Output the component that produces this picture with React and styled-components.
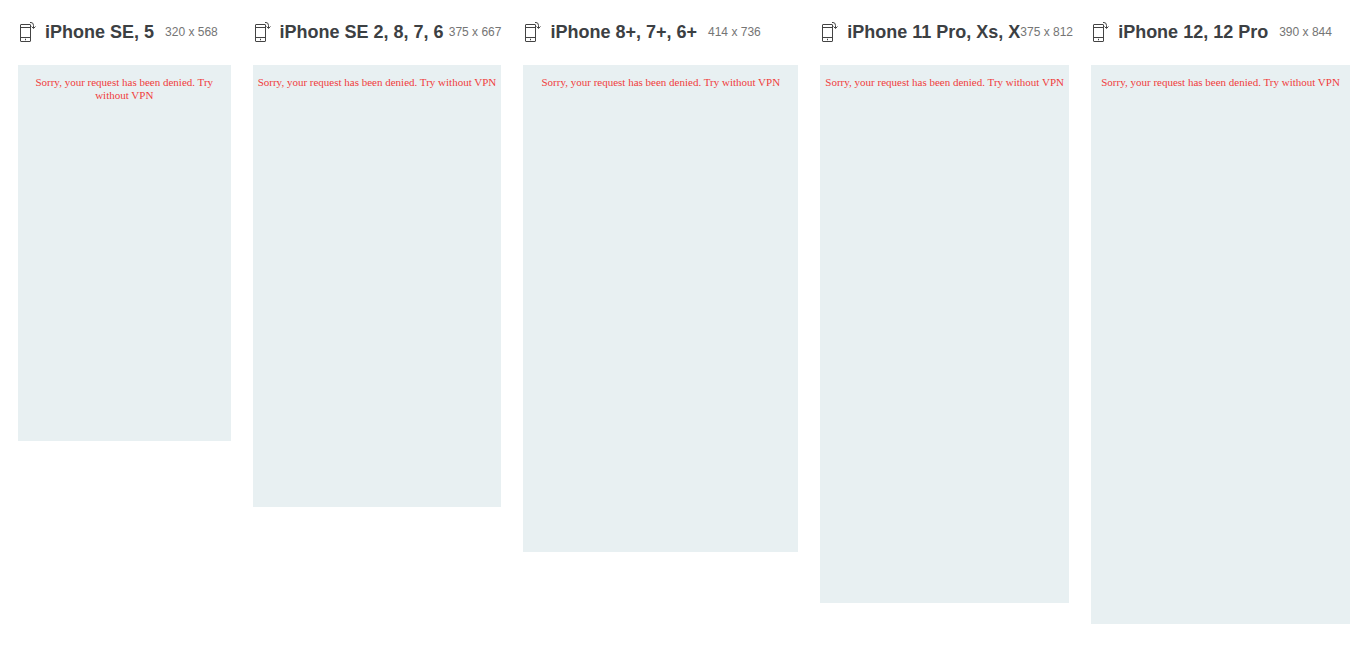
import { useState } from 'react';
import styled, { createGlobalStyle } from 'styled-components';

const devices = [
  { name: 'iPhone SE, 5', width: 320, height: 568 },
  { name: 'iPhone SE 2, 8, 7, 6', width: 375, height: 667 },
  { name: 'iPhone 8+, 7+, 6+', width: 414, height: 736 },
  { name: 'iPhone 11 Pro, Xs, X', width: 375, height: 812 },
  { name: 'iPhone 12, 12 Pro', width: 390, height: 844 },
];

const GlobalStyle = createGlobalStyle`
  body {
    margin: 0;
    background-color: #ffffff;
    font-family: 'Liberation Sans', Arial, sans-serif;
  }
`;

const DeviceGrid = styled.main`
  display: grid;
  grid-template-columns: ${(props) => props.$columns};
  align-items: start;
  gap: 22px;
  padding: 16px 22px 24px 18px;
`;

const DeviceHeader = styled.header`
  display: flex;
  align-items: center;
  height: 32px;
  margin-bottom: 17px;
  white-space: nowrap;
`;

const RotateButton = styled.button`
  display: flex;
  flex-shrink: 0;
  width: 27px;
  padding: 0 0 0 2px;
  border: none;
  background: none;
  color: #444444;
  cursor: pointer;
`;

const DeviceName = styled.h2`
  flex-shrink: 0;
  margin: 0;
  color: #3c4043;
  font-size: 18px;
  line-height: 24px;
`;

// gives way first when the name is long
const HeaderGap = styled.span`
  flex: 0 1 11px;
`;

const DeviceSize = styled.span`
  flex-shrink: 0;
  color: #757575;
  font-size: 12px;
  line-height: 16px;
`;

const Screen = styled.div`
  box-sizing: border-box;
  aspect-ratio: ${(props) => props.$ratio};
  padding: 11px 4px;
  background-color: #e8f0f2;
`;

const Message = styled.p`
  margin: 0;
  color: #f03c3c;
  font-family: 'Liberation Serif', 'Times New Roman', serif;
  font-size: 11px;
  line-height: 13px;
  text-align: center;
`;

const RotateIcon = () => (
  <svg width="17" height="20" viewBox="0 0 17 20" fill="none" stroke="currentColor" aria-hidden="true">
    <rect x="0.5" y="2.5" width="10" height="17" rx="0.5" />
    <path d="M0 5.5h11M0 15.5h11" />
    <path d="M5 17.5h1" strokeWidth="1.5" />
    <path d="M10 0.5h1q2.5 0 2.5 3V6" />
    <path d="M11.5 4.5l2 2 2-2" />
  </svg>
);

const Device = ({ name, width, height }) => {
  const [rotated, setRotated] = useState(false);
  const w = rotated ? height : width;
  const h = rotated ? width : height;

  return (
    <section>
      <DeviceHeader>
        <RotateButton type="button" aria-label={`Rotate ${name}`} onClick={() => setRotated(!rotated)}>
          <RotateIcon />
        </RotateButton>
        <DeviceName>{name}</DeviceName>
        <HeaderGap />
        <DeviceSize>
          {w} x {h}
        </DeviceSize>
      </DeviceHeader>
      <Screen $ratio={`${w + 1} / ${h}`}>
        <Message>Sorry, your request has been denied. Try without VPN</Message>
      </Screen>
    </section>
  );
};

const App = () => {
  const columns = devices.map(({ width }) => `minmax(0, ${width + 1}fr)`).join(' ');

  return (
    <>
      <GlobalStyle />
      <DeviceGrid $columns={columns}>
        {devices.map((device) => (
          <Device key={device.name} {...device} />
        ))}
      </DeviceGrid>
    </>
  );
};

export default App;
